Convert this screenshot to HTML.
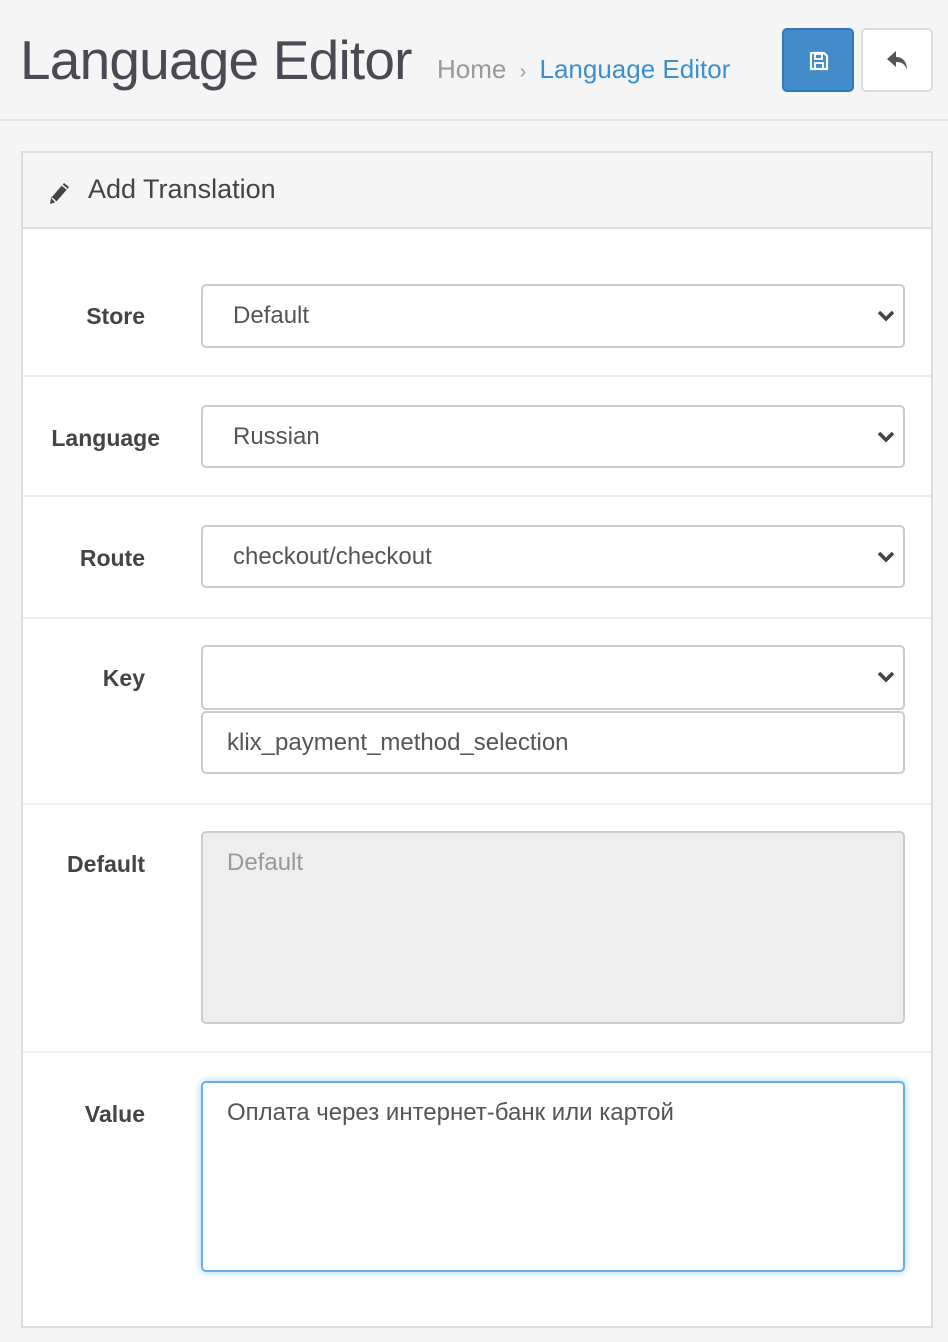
<!DOCTYPE html>
<html><head><meta charset="utf-8"><style>
*{box-sizing:border-box;margin:0;padding:0}
body{width:948px;height:1342px;background:#f5f5f5;font-family:"Liberation Sans",sans-serif;position:relative;overflow:hidden;color:#555}
.abs{position:absolute}
.hdr{left:0;top:0;width:948px;height:121px;border-bottom:2px solid #e5e5e5}
h1{position:absolute;left:20px;top:28px;font-size:55px;color:#4a4a55;letter-spacing:-0.8px;font-weight:normal}
.bc{left:437px;top:54px;font-size:26px;color:#999}
.bc span.a{color:#3d8fcf}
.btn{top:28px;width:72px;height:64px;border-radius:5px}
.panel{left:21px;top:151px;width:912px;height:1177px;border:2px solid #ddd;background:#fff}
.ph{left:0;top:0;width:908px;height:76px;background:#f5f5f5;border-bottom:2px solid #ddd}
.ph div{position:absolute;left:65px;top:21px;font-size:27px;color:#444}
.row{left:0;width:908px;border-bottom:2px solid #eee}
.lbl{position:absolute;width:122px;text-align:right;font-weight:bold;font-size:23px;color:#444}
.f{position:absolute;left:178px;width:704px;border:2px solid #ccc;border-radius:5px;background:#fff;font-size:24px;color:#555;padding-left:30px;line-height:59px}
.f svg{position:absolute;right:7px;top:23px}
.ta{line-height:normal;padding:16px 24px}
</style></head><body>
<div class="abs hdr"></div>
<h1>Language Editor</h1>
<div class="abs bc">Home <span style="font-size:20px;margin:0 6px">›</span> <span class="a">Language Editor</span></div>
<div class="abs btn" style="left:782px;background:#418bca;border:2px solid #2f79b8">
<svg class="abs" style="left:25px;top:21px" width="20" height="20" viewBox="0 0 20 20"><path d="M2 2h13l3 3v13H2z" fill="none" stroke="#fff" stroke-width="2.2"/><rect x="6" y="3" width="7" height="5" fill="none" stroke="#fff" stroke-width="1.8"/><rect x="6" y="12" width="8" height="6" fill="none" stroke="#fff" stroke-width="1.8"/></svg></div>
<div class="abs btn" style="left:861px;background:#fff;border:2px solid #ddd">
<svg class="abs" style="left:23px;top:20px" width="24" height="22" viewBox="0 0 24 22"><path d="M10 1L1 9l9 8v-5c6 0 9 2 11 8 0-8-4-13-11-13z" fill="#555"/></svg></div>
<div class="abs panel">
<div class="abs ph"><svg class="abs" style="left:25px;top:25px" width="26" height="28" viewBox="0 0 26 28"><path d="M3 20L16 5l5 4L8 24l-6 2z" fill="#444"/><path d="M14 7l5 4" stroke="#f5f5f5" stroke-width="1.5"/><path d="M4 20l4 4" stroke="#f5f5f5" stroke-width="1.5"/></svg><div>Add Translation</div></div>
<div class="abs row" style="top:76px;height:148px"></div>
<div class="abs row" style="top:224px;height:120px"></div>
<div class="abs row" style="top:344px;height:122px"></div>
<div class="abs row" style="top:466px;height:186px"></div>
<div class="abs row" style="top:652px;height:248px"></div>
<div class="lbl" style="top:150px">Store</div>
<div class="lbl" style="top:272px;width:137px">Language</div>
<div class="lbl" style="top:392px">Route</div>
<div class="lbl" style="top:512px">Key</div>
<div class="lbl" style="top:698px">Default</div>
<div class="lbl" style="top:948px">Value</div>
<div class="f" style="top:131px;height:64px">Default<svg width="20" height="14" viewBox="0 0 20 14"><path d="M3 3l7 7 7-7" fill="none" stroke="#444" stroke-width="3.5"/></svg></div>
<div class="f" style="top:252px;height:63px">Russian<svg width="20" height="14" viewBox="0 0 20 14"><path d="M3 3l7 7 7-7" fill="none" stroke="#444" stroke-width="3.5"/></svg></div>
<div class="f" style="top:372px;height:63px">checkout/checkout<svg width="20" height="14" viewBox="0 0 20 14"><path d="M3 3l7 7 7-7" fill="none" stroke="#444" stroke-width="3.5"/></svg></div>
<div class="f" style="top:492px;height:65px">&nbsp;<svg width="20" height="14" viewBox="0 0 20 14"><path d="M3 3l7 7 7-7" fill="none" stroke="#444" stroke-width="3.5"/></svg></div>
<div class="f" style="top:558px;height:63px;padding-left:24px">klix_payment_method_selection</div>
<div class="f ta" style="top:678px;height:193px;background:#eee;color:#999">Default</div>
<div class="f ta" style="top:928px;height:191px;border-color:#66afe9;box-shadow:0 0 8px rgba(102,175,233,.6)">Оплата через интернет-банк или картой</div>
</div>
</body></html>
